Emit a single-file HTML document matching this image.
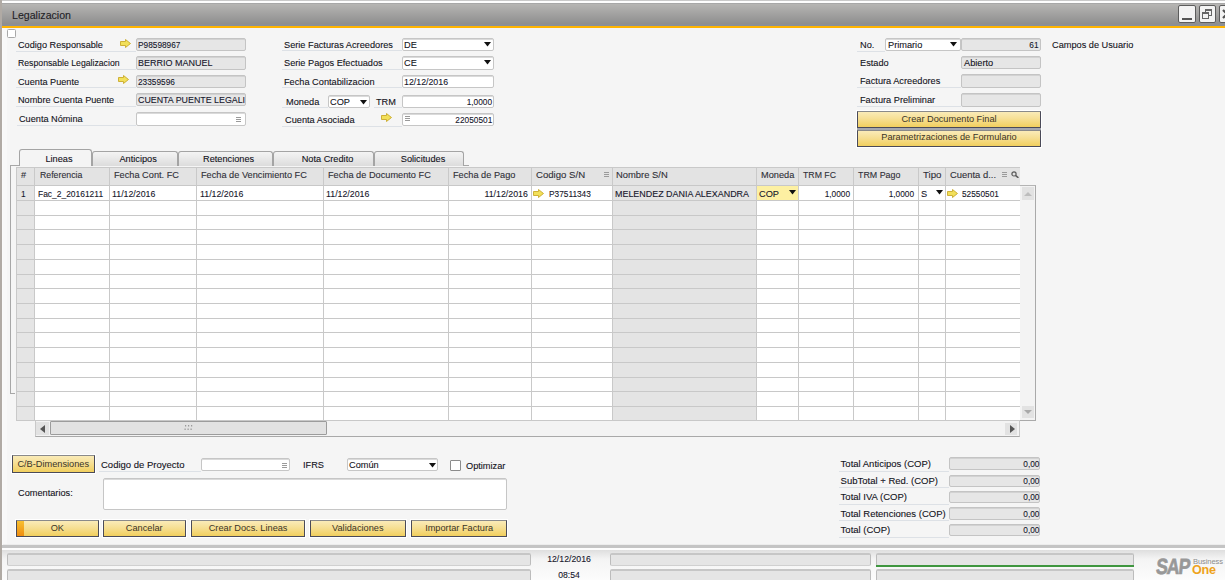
<!DOCTYPE html>
<html><head><meta charset="utf-8"><style>
html,body{margin:0;padding:0;}
body{width:1225px;height:580px;position:relative;overflow:hidden;background:#f5f5f5;font-family:"Liberation Sans",sans-serif;}
body>div{position:absolute;}
.t{white-space:nowrap;line-height:1;-webkit-text-stroke:0.1px currentColor;}
svg{display:block;}
</style></head><body>
<div style="left:0px;top:0px;width:1225px;height:1px;background:#c9c9c9"></div>
<div style="left:0px;top:1px;width:1225px;height:2px;background:#fdfdfd"></div>
<div style="left:0px;top:0px;width:1.5px;height:580px;background:#b0aaa4"></div>
<div style="left:1.5px;top:3px;width:1.5px;height:577px;background:#fafafa"></div>
<div style="left:2px;top:3px;width:1223px;height:1px;background:#a7a7a7"></div>
<div style="left:2px;top:4px;width:1223px;height:20px;background:linear-gradient(#b6b5b3,#8e8e8e)"></div>
<div style="left:2px;top:24px;width:1223px;height:2px;background:#8b8f96"></div>
<div style="left:2px;top:26px;width:1223px;height:2px;background:#ffb400"></div>
<div style="left:3px;top:28px;width:1222px;height:517px;background:#f5f5f5"></div>
<div style="left:3px;top:28px;width:4px;height:517px;background:#f8f8f8"></div>
<div class="t" style="left:12px;top:9.94px;font-size:11px;color:#221e26;transform:scaleX(0.965);transform-origin:0 0;">Legalizacion</div>
<div style="left:1178px;top:5px;width:18px;height:18px;background:#f3f3f3;border:1px solid #5c5c5c;box-sizing:border-box;border-radius:2px"></div>
<div style="left:1182px;top:17.5px;width:10px;height:2.0px;background:#555"></div>
<div style="left:1198.5px;top:5px;width:17.5px;height:18px;background:#f3f3f3;border:1px solid #5c5c5c;box-sizing:border-box;border-radius:2px"></div>
<div style="left:1205px;top:9px;width:7px;height:7px;border:1.5px solid #666;border-top-width:2px;box-sizing:border-box"></div>
<div style="left:1202px;top:12px;width:7px;height:7px;background:#f3f3f3;border:1.5px solid #666;border-top-width:2.5px;box-sizing:border-box"></div>
<div style="left:1219px;top:5px;width:11px;height:18px;background:#f3f3f3;border:1px solid #5c5c5c;box-sizing:border-box;border-radius:2px"></div>
<div style="left:1222px;top:9px;width:10px;height:10px"><svg width="10" height="10" viewBox="0 0 10 10"><path d="M1 1L9 9M9 1L1 9" stroke="#505050" stroke-width="2.2"/></svg></div>
<div style="left:7px;top:28.5px;width:9px;height:9.0px;background:#fff;border:1px solid #a8a8a8;box-sizing:border-box;border-radius:1.5px"></div>
<div style="left:16px;top:50.5px;width:119.5px;height:1.0px;background:#dde1e6"></div>
<div class="t" style="left:18px;top:40.21px;font-size:9.5px;color:#121220;transform:scaleX(0.9632);transform-origin:0 0;">Codigo Responsable</div>
<div style="left:135.5px;top:38px;width:110.5px;height:13px;background:#e6e6e6;border:1px solid #c4c4c4;box-sizing:border-box;border-radius:2px;box-shadow:inset 0 1px 0 #d2d2d2"></div>
<div class="t" style="left:137.5px;top:40.21px;font-size:9.5px;color:#15152a;transform:scaleX(0.8737);transform-origin:0 0;">P98598967</div>
<div style="left:16px;top:69px;width:119.5px;height:1px;background:#dde1e6"></div>
<div class="t" style="left:18px;top:58.21px;font-size:9.5px;color:#121220;transform:scaleX(0.9158);transform-origin:0 0;">Responsable Legalizacion</div>
<div style="left:135.5px;top:56px;width:110.5px;height:13.5px;background:#e6e6e6;border:1px solid #c4c4c4;box-sizing:border-box;border-radius:2px;box-shadow:inset 0 1px 0 #d2d2d2"></div>
<div class="t" style="left:137.5px;top:58.21px;font-size:9.5px;color:#15152a;transform:scaleX(0.9474);transform-origin:0 0;">BERRIO MANUEL</div>
<div style="left:16px;top:87px;width:119.5px;height:1px;background:#dde1e6"></div>
<div class="t" style="left:18px;top:77.21px;font-size:9.5px;color:#121220;transform:scaleX(0.9632);transform-origin:0 0;">Cuenta Puente</div>
<div style="left:135.5px;top:74.5px;width:110.5px;height:13.0px;background:#e6e6e6;border:1px solid #c4c4c4;box-sizing:border-box;border-radius:2px;box-shadow:inset 0 1px 0 #d2d2d2"></div>
<div class="t" style="left:137.5px;top:77.21px;font-size:9.5px;color:#15152a;transform:scaleX(0.8737);transform-origin:0 0;">23359596</div>
<div style="left:16px;top:105.5px;width:119.5px;height:1.0px;background:#dde1e6"></div>
<div class="t" style="left:18px;top:95.21px;font-size:9.5px;color:#121220;transform:scaleX(0.9632);transform-origin:0 0;">Nombre Cuenta Puente</div>
<div style="left:135.5px;top:93px;width:110.5px;height:13px;background:#e6e6e6;border:1px solid #c4c4c4;box-sizing:border-box;border-radius:2px;box-shadow:inset 0 1px 0 #d2d2d2"></div>
<div class="t" style="left:137.5px;top:95.21px;font-size:9.5px;color:#15152a;transform:scaleX(0.9316);transform-origin:0 0;">CUENTA PUENTE LEGALI</div>
<div style="left:17px;top:125px;width:118.5px;height:1px;background:#dde1e6"></div>
<div class="t" style="left:19px;top:114.21px;font-size:9.5px;color:#121220;transform:scaleX(0.9632);transform-origin:0 0;">Cuenta N&oacute;mina</div>
<div style="left:135.5px;top:112px;width:110.5px;height:13.5px;background:#fff;border:1px solid #c6c6c6;box-sizing:border-box;border-radius:2px;box-shadow:inset 0 1px 0 #dadada"></div>
<div style="left:236px;top:116.5px;width:5px;height:5px"><svg width="5" height="5" viewBox="0 0 5 5"><rect x="0" y="0" width="5" height="1" fill="#9a9a9a"/><rect x="0" y="2" width="5" height="1" fill="#9a9a9a"/><rect x="0" y="4" width="5" height="1" fill="#9a9a9a"/></svg></div>
<div style="left:120px;top:39px;width:11px;height:9px"><svg width="11" height="9" viewBox="0 0 11 9"><path d="M0.5 2.5H5.5V0.5L10.5 4.5L5.5 8.5V6.5H0.5Z" fill="#f2e05a" stroke="#c9a92a" stroke-width="0.9"/></svg></div>
<div style="left:117.5px;top:75px;width:11px;height:9px"><svg width="11" height="9" viewBox="0 0 11 9"><path d="M0.5 2.5H5.5V0.5L10.5 4.5L5.5 8.5V6.5H0.5Z" fill="#f2e05a" stroke="#c9a92a" stroke-width="0.9"/></svg></div>
<div style="left:282px;top:50px;width:120px;height:1px;background:#dde1e6"></div>
<div class="t" style="left:284.3px;top:40.21px;font-size:9.5px;color:#121220;transform:scaleX(0.9684);transform-origin:0 0;">Serie Facturas Acreedores</div>
<div style="left:402px;top:38px;width:92px;height:13px;background:#fff;border:1px solid #c6c6c6;box-sizing:border-box;border-radius:2px;box-shadow:inset 0 1px 0 #dadada"></div>
<div style="left:282px;top:69px;width:120px;height:1px;background:#dde1e6"></div>
<div class="t" style="left:284.3px;top:58.21px;font-size:9.5px;color:#121220;transform:scaleX(0.9684);transform-origin:0 0;">Serie Pagos Efectuados</div>
<div style="left:402px;top:56px;width:92px;height:13.5px;background:#fff;border:1px solid #c6c6c6;box-sizing:border-box;border-radius:2px;box-shadow:inset 0 1px 0 #dadada"></div>
<div style="left:282px;top:87px;width:120px;height:1px;background:#dde1e6"></div>
<div class="t" style="left:284.3px;top:77.21px;font-size:9.5px;color:#121220;transform:scaleX(0.9684);transform-origin:0 0;">Fecha Contabilizacion</div>
<div style="left:402px;top:74.5px;width:92px;height:13.5px;background:#fff;border:1px solid #c6c6c6;box-sizing:border-box;border-radius:2px;box-shadow:inset 0 1px 0 #dadada"></div>
<div style="left:282px;top:107px;width:45.5px;height:1px;background:#dde1e6"></div>
<div style="left:374px;top:107px;width:28px;height:1px;background:#dde1e6"></div>
<div class="t" style="left:285.7px;top:97.21px;font-size:9.5px;color:#121220;transform:scaleX(0.9684);transform-origin:0 0;">Moneda</div>
<div style="left:327.5px;top:94.7px;width:42.0px;height:13.0px;background:#fff;border:1px solid #c6c6c6;box-sizing:border-box;border-radius:2px;box-shadow:inset 0 1px 0 #dadada"></div>
<div class="t" style="left:330px;top:97.21px;font-size:9.5px;color:#121220;transform:scaleX(0.9684);transform-origin:0 0;">COP</div>
<div style="left:360px;top:99.5px;width:7px;height:5px"><svg width="7" height="5" viewBox="0 0 7 5"><path d="M0 0H7L3.5 4.5Z" fill="#111"/></svg></div>
<div class="t" style="left:376.2px;top:97.21px;font-size:9.5px;color:#121220;transform:scaleX(0.9684);transform-origin:0 0;">TRM</div>
<div style="left:402px;top:94.7px;width:92px;height:13.3px;background:#fff;border:1px solid #c6c6c6;box-sizing:border-box;border-radius:2px;box-shadow:inset 0 1px 0 #dadada"></div>
<div style="left:282px;top:126px;width:120px;height:1px;background:#dde1e6"></div>
<div class="t" style="left:285.4px;top:115.21px;font-size:9.5px;color:#121220;transform:scaleX(0.9684);transform-origin:0 0;">Cuenta Asociada</div>
<div style="left:402px;top:113.3px;width:92px;height:13.0px;background:#fff;border:1px solid #c6c6c6;box-sizing:border-box;border-radius:2px;box-shadow:inset 0 1px 0 #dadada"></div>
<div class="t" style="left:404px;top:40.21px;font-size:9.5px;color:#121220;transform:scaleX(0.9684);transform-origin:0 0;">DE</div>
<div style="left:484px;top:42px;width:7px;height:5px"><svg width="7" height="5" viewBox="0 0 7 5"><path d="M0 0H7L3.5 4.5Z" fill="#111"/></svg></div>
<div class="t" style="left:404px;top:58.21px;font-size:9.5px;color:#121220;transform:scaleX(0.9684);transform-origin:0 0;">CE</div>
<div style="left:484px;top:60.2px;width:7px;height:5px"><svg width="7" height="5" viewBox="0 0 7 5"><path d="M0 0H7L3.5 4.5Z" fill="#111"/></svg></div>
<div class="t" style="left:403.5px;top:77.21px;font-size:9.5px;color:#15152a;transform:scaleX(0.9263);transform-origin:0 0;">12/12/2016</div>
<div class="t" style="right:732.5px;top:97.21px;font-size:9.5px;color:#15152a;text-align:right;transform:scaleX(0.8737);transform-origin:100% 0;">1,0000</div>
<div class="t" style="right:732.5px;top:115.21px;font-size:9.5px;color:#15152a;text-align:right;transform:scaleX(0.8737);transform-origin:100% 0;">22050501</div>
<div style="left:405px;top:116px;width:5px;height:5px"><svg width="5" height="5" viewBox="0 0 5 5"><rect x="0" y="0" width="5" height="1" fill="#9a9a9a"/><rect x="0" y="2" width="5" height="1" fill="#9a9a9a"/><rect x="0" y="4" width="5" height="1" fill="#9a9a9a"/></svg></div>
<div style="left:381px;top:112.5px;width:11px;height:9px"><svg width="11" height="9" viewBox="0 0 11 9"><path d="M0.5 2.5H5.5V0.5L10.5 4.5L5.5 8.5V6.5H0.5Z" fill="#f2e05a" stroke="#c9a92a" stroke-width="0.9"/></svg></div>
<div class="t" style="left:859.5px;top:40.21px;font-size:9.5px;color:#121220;transform:scaleX(0.9684);transform-origin:0 0;">No.</div>
<div style="left:857px;top:50.5px;width:28px;height:1.0px;background:#dde1e6"></div>
<div style="left:885px;top:38.3px;width:75.5px;height:12.5px;background:#fff;border:1px solid #c6c6c6;box-sizing:border-box;border-radius:2px;box-shadow:inset 0 1px 0 #dadada"></div>
<div class="t" style="left:888px;top:40.21px;font-size:9.5px;color:#121220;transform:scaleX(0.9684);transform-origin:0 0;">Primario</div>
<div style="left:950px;top:42px;width:7px;height:5px"><svg width="7" height="5" viewBox="0 0 7 5"><path d="M0 0H7L3.5 4.5Z" fill="#111"/></svg></div>
<div style="left:961px;top:38px;width:80px;height:12.8px;background:#e6e6e6;border:1px solid #c4c4c4;box-sizing:border-box;border-radius:2px;box-shadow:inset 0 1px 0 #d2d2d2"></div>
<div class="t" style="right:186px;top:40.21px;font-size:9.5px;color:#15152a;text-align:right;transform:scaleX(0.8737);transform-origin:100% 0;">61</div>
<div class="t" style="left:859.5px;top:58.21px;font-size:9.5px;color:#121220;transform:scaleX(0.9684);transform-origin:0 0;">Estado</div>
<div style="left:961px;top:56px;width:80px;height:13.3px;background:#e6e6e6;border:1px solid #c4c4c4;box-sizing:border-box;border-radius:2px;box-shadow:inset 0 1px 0 #d2d2d2"></div>
<div class="t" style="left:963.5px;top:58.21px;font-size:9.5px;color:#121220;transform:scaleX(0.9684);transform-origin:0 0;">Abierto</div>
<div class="t" style="left:859.5px;top:76.21px;font-size:9.5px;color:#121220;transform:scaleX(0.9684);transform-origin:0 0;">Factura Acreedores</div>
<div style="left:857px;top:87px;width:104px;height:1px;background:#dde1e6"></div>
<div style="left:961px;top:74px;width:80px;height:13.5px;background:#e6e6e6;border:1px solid #c4c4c4;box-sizing:border-box;border-radius:2px;box-shadow:inset 0 1px 0 #d2d2d2"></div>
<div class="t" style="left:859.5px;top:94.71px;font-size:9.5px;color:#121220;transform:scaleX(0.9684);transform-origin:0 0;">Factura Preliminar</div>
<div style="left:857px;top:105.5px;width:104px;height:1.0px;background:#dde1e6"></div>
<div style="left:961px;top:93px;width:80px;height:13.6px;background:#e6e6e6;border:1px solid #c4c4c4;box-sizing:border-box;border-radius:2px;box-shadow:inset 0 1px 0 #d2d2d2"></div>
<div style="left:857px;top:111px;width:184px;height:17.2px;background:linear-gradient(#faebb8,#f6df94 45%,#f1cf5e);border:1px solid #4a4a58;border-top-color:#8a8a8a;box-sizing:border-box;box-shadow:0 0 0 1px #fff"></div>
<div class="t" style="left:837.0px;width:224px;top:114.21px;font-size:9.5px;color:#3a3428;text-align:center;transform:scaleX(0.9684);transform-origin:50% 0;-webkit-text-stroke:0">Crear Documento Final</div>
<div style="left:857px;top:130.2px;width:184px;height:16.4px;background:linear-gradient(#faebb8,#f6df94 45%,#f1cf5e);border:1px solid #4a4a58;border-top-color:#8a8a8a;box-sizing:border-box;box-shadow:0 0 0 1px #fff"></div>
<div class="t" style="left:837.0px;width:224px;top:132.21px;font-size:9.5px;color:#3a3428;text-align:center;transform:scaleX(0.9684);transform-origin:50% 0;-webkit-text-stroke:0">Parametrizaciones de Formulario</div>
<div style="left:857px;top:128px;width:184px;height:2.2px;background:#a3a6ae"></div>
<div class="t" style="left:1051.5px;top:40.21px;font-size:9.5px;color:#121220;transform:scaleX(0.9684);transform-origin:0 0;">Campos de Usuario</div>
<div style="left:10px;top:165px;width:459px;height:1px;background:#a7a7a7"></div>
<div style="left:10px;top:165px;width:1px;height:229px;background:#a7a7a7"></div>
<div style="left:10px;top:393px;width:5px;height:1px;background:#a7a7a7"></div>
<div style="left:91.5px;top:150.5px;width:86.3px;height:15.0px;background:linear-gradient(#f4f4f4,#dcdcdc);border:1px solid #a4a4a4;border-bottom:none;box-sizing:border-box;border-radius:3px 3px 0 0"></div>
<div class="t" style="left:95.0px;width:86.30000000000001px;top:154.21px;font-size:9.5px;color:#121220;text-align:center;transform:scaleX(0.9684);transform-origin:50% 0;">Anticipos</div>
<div style="left:177.8px;top:150.5px;width:95.2px;height:15.0px;background:linear-gradient(#f4f4f4,#dcdcdc);border:1px solid #a4a4a4;border-bottom:none;box-sizing:border-box;border-radius:3px 3px 0 0"></div>
<div class="t" style="left:181.3px;width:95.19999999999999px;top:154.21px;font-size:9.5px;color:#121220;text-align:center;transform:scaleX(0.9684);transform-origin:50% 0;">Retenciones</div>
<div style="left:273px;top:150.5px;width:101px;height:15.0px;background:linear-gradient(#f4f4f4,#dcdcdc);border:1px solid #a4a4a4;border-bottom:none;box-sizing:border-box;border-radius:3px 3px 0 0"></div>
<div class="t" style="left:276.5px;width:101px;top:154.21px;font-size:9.5px;color:#121220;text-align:center;transform:scaleX(0.9684);transform-origin:50% 0;">Nota Credito</div>
<div style="left:374px;top:150.5px;width:90px;height:15.0px;background:linear-gradient(#f4f4f4,#dcdcdc);border:1px solid #a4a4a4;border-bottom:none;box-sizing:border-box;border-radius:3px 3px 0 0"></div>
<div class="t" style="left:377.5px;width:90px;top:154.21px;font-size:9.5px;color:#121220;text-align:center;transform:scaleX(0.9684);transform-origin:50% 0;">Solicitudes</div>
<div style="left:18.5px;top:149px;width:73.0px;height:17px;background:#f4f4f4;border:1px solid #a4a4a4;border-bottom:none;box-sizing:border-box;border-radius:3px 3px 0 0"></div>
<div class="t" style="left:24.4px;width:70px;top:154.21px;font-size:9.5px;color:#121220;text-align:center;transform:scaleX(0.9684);transform-origin:50% 0;">Lineas</div>
<div style="left:16.5px;top:185.5px;width:1003.5px;height:235.0px;background:#fff"></div>
<div style="left:16.5px;top:185.5px;width:18.0px;height:235.0px;background:#e5e5e5"></div>
<div style="left:612.5px;top:185.5px;width:144.0px;height:235.0px;background:#e4e4e4"></div>
<div style="left:756.5px;top:186px;width:42.0px;height:14px;background:#fdf0a2"></div>
<div style="left:16.5px;top:167px;width:1003.5px;height:18.5px;background:#e3e3e3;border-top:1px solid #c9c9c9;box-sizing:border-box"></div>
<div style="left:16.5px;top:185px;width:1003.5px;height:1px;background:#c8c8c8"></div>
<div style="left:16.5px;top:200px;width:1003.5px;height:1px;background:#c8c8c8"></div>
<div style="left:16.5px;top:215px;width:1003.5px;height:1px;background:#c8c8c8"></div>
<div style="left:16.5px;top:229px;width:1003.5px;height:1px;background:#c8c8c8"></div>
<div style="left:16.5px;top:244px;width:1003.5px;height:1px;background:#c8c8c8"></div>
<div style="left:16.5px;top:259px;width:1003.5px;height:1px;background:#c8c8c8"></div>
<div style="left:16.5px;top:274px;width:1003.5px;height:1px;background:#c8c8c8"></div>
<div style="left:16.5px;top:288px;width:1003.5px;height:1px;background:#c8c8c8"></div>
<div style="left:16.5px;top:303px;width:1003.5px;height:1px;background:#c8c8c8"></div>
<div style="left:16.5px;top:318px;width:1003.5px;height:1px;background:#c8c8c8"></div>
<div style="left:16.5px;top:332px;width:1003.5px;height:1px;background:#c8c8c8"></div>
<div style="left:16.5px;top:347px;width:1003.5px;height:1px;background:#c8c8c8"></div>
<div style="left:16.5px;top:362px;width:1003.5px;height:1px;background:#c8c8c8"></div>
<div style="left:16.5px;top:377px;width:1003.5px;height:1px;background:#c8c8c8"></div>
<div style="left:16.5px;top:391px;width:1003.5px;height:1px;background:#c8c8c8"></div>
<div style="left:16.5px;top:406px;width:1003.5px;height:1px;background:#c8c8c8"></div>
<div style="left:16.5px;top:420px;width:1003.5px;height:1px;background:#c8c8c8"></div>
<div style="left:34px;top:167px;width:1px;height:253.5px;background:#c9c9c9"></div>
<div style="left:109px;top:167px;width:1px;height:253.5px;background:#c9c9c9"></div>
<div style="left:196px;top:167px;width:1px;height:253.5px;background:#c9c9c9"></div>
<div style="left:323px;top:167px;width:1px;height:253.5px;background:#c9c9c9"></div>
<div style="left:448px;top:167px;width:1px;height:253.5px;background:#c9c9c9"></div>
<div style="left:531px;top:167px;width:1px;height:253.5px;background:#c9c9c9"></div>
<div style="left:612px;top:167px;width:1px;height:253.5px;background:#c9c9c9"></div>
<div style="left:756px;top:167px;width:1px;height:253.5px;background:#c9c9c9"></div>
<div style="left:798px;top:167px;width:1px;height:253.5px;background:#c9c9c9"></div>
<div style="left:853px;top:167px;width:1px;height:253.5px;background:#c9c9c9"></div>
<div style="left:918px;top:167px;width:1px;height:253.5px;background:#c9c9c9"></div>
<div style="left:945px;top:167px;width:1px;height:253.5px;background:#c9c9c9"></div>
<div style="left:16px;top:167px;width:1px;height:253.5px;background:#c9c9c9"></div>
<div class="t" style="left:21px;top:170.21px;font-size:9.5px;color:#2e2e36;transform:scaleX(0.9684);transform-origin:0 0;">#</div>
<div class="t" style="left:39.5px;top:170.21px;font-size:9.5px;color:#2e2e36;transform:scaleX(0.9211);transform-origin:0 0;">Referencia</div>
<div class="t" style="left:113.7px;top:170.21px;font-size:9.5px;color:#2e2e36;transform:scaleX(0.9684);transform-origin:0 0;">Fecha Cont. FC</div>
<div class="t" style="left:200.6px;top:170.21px;font-size:9.5px;color:#2e2e36;transform:scaleX(0.9684);transform-origin:0 0;">Fecha de Vencimiento FC</div>
<div class="t" style="left:328px;top:170.21px;font-size:9.5px;color:#2e2e36;transform:scaleX(0.9684);transform-origin:0 0;">Fecha de Documento FC</div>
<div class="t" style="left:452.5px;top:170.21px;font-size:9.5px;color:#2e2e36;transform:scaleX(0.9684);transform-origin:0 0;">Fecha de Pago</div>
<div class="t" style="left:535.8px;top:170.21px;font-size:9.5px;color:#2e2e36;transform:scaleX(1.0105);transform-origin:0 0;">Codigo S/N</div>
<div class="t" style="left:616.3px;top:170.21px;font-size:9.5px;color:#2e2e36;transform:scaleX(0.9895);transform-origin:0 0;">Nombre S/N</div>
<div class="t" style="left:760.8px;top:170.21px;font-size:9.5px;color:#2e2e36;transform:scaleX(0.9684);transform-origin:0 0;">Moneda</div>
<div class="t" style="left:803.2px;top:170.21px;font-size:9.5px;color:#2e2e36;transform:scaleX(0.92);transform-origin:0 0;">TRM FC</div>
<div class="t" style="left:858px;top:170.21px;font-size:9.5px;color:#2e2e36;transform:scaleX(0.9337);transform-origin:0 0;">TRM Pago</div>
<div class="t" style="left:922.5px;top:170.21px;font-size:9.5px;color:#2e2e36;transform:scaleX(1.0211);transform-origin:0 0;">Tipo</div>
<div class="t" style="left:950.1px;top:170.21px;font-size:9.5px;color:#2e2e36;transform:scaleX(0.9895);transform-origin:0 0;">Cuenta d...</div>
<div style="left:603.5px;top:171.5px;width:5px;height:5px"><svg width="5" height="5" viewBox="0 0 5 5"><rect x="0" y="0" width="5" height="1" fill="#9a9a9a"/><rect x="0" y="2" width="5" height="1" fill="#9a9a9a"/><rect x="0" y="4" width="5" height="1" fill="#9a9a9a"/></svg></div>
<div style="left:1002px;top:171.5px;width:5px;height:5px"><svg width="5" height="5" viewBox="0 0 5 5"><rect x="0" y="0" width="5" height="1" fill="#9a9a9a"/><rect x="0" y="2" width="5" height="1" fill="#9a9a9a"/><rect x="0" y="4" width="5" height="1" fill="#9a9a9a"/></svg></div>
<div style="left:1010.5px;top:171px;width:8px;height:7px"><svg width="8" height="7" viewBox="0 0 8 7"><circle cx="3" cy="2.9" r="2.1" fill="none" stroke="#5a5a5a" stroke-width="1.2"/><path d="M4.5 4.4L7.4 6.8" stroke="#5a5a5a" stroke-width="1.6"/></svg></div>
<div class="t" style="left:20.6px;top:189.21px;font-size:9.5px;color:#15152a;transform:scaleX(0.8737);transform-origin:0 0;">1</div>
<div class="t" style="left:37.8px;top:189.21px;font-size:9.5px;color:#15152a;transform:scaleX(0.8884);transform-origin:0 0;">Fac_2_20161211</div>
<div class="t" style="left:112px;top:189.21px;font-size:9.5px;color:#15152a;transform:scaleX(0.9263);transform-origin:0 0;">11/12/2016</div>
<div class="t" style="left:199.5px;top:189.21px;font-size:9.5px;color:#15152a;transform:scaleX(0.9263);transform-origin:0 0;">11/12/2016</div>
<div class="t" style="left:325.8px;top:189.21px;font-size:9.5px;color:#15152a;transform:scaleX(0.9263);transform-origin:0 0;">11/12/2016</div>
<div class="t" style="right:697.5px;top:189.21px;font-size:9.5px;color:#15152a;text-align:right;transform:scaleX(0.9263);transform-origin:100% 0;">11/12/2016</div>
<div style="left:533px;top:188.5px;width:11px;height:9px"><svg width="11" height="9" viewBox="0 0 11 9"><path d="M0.5 2.5H5.5V0.5L10.5 4.5L5.5 8.5V6.5H0.5Z" fill="#f2e05a" stroke="#c9a92a" stroke-width="0.9"/></svg></div>
<div class="t" style="left:549px;top:189.21px;font-size:9.5px;color:#15152a;transform:scaleX(0.8737);transform-origin:0 0;">P37511343</div>
<div class="t" style="left:615px;top:189.21px;font-size:9.5px;color:#15152a;transform:scaleX(0.94);transform-origin:0 0;">MELENDEZ DANIA ALEXANDRA</div>
<div class="t" style="left:759px;top:189.21px;font-size:9.5px;color:#15152a;transform:scaleX(0.9684);transform-origin:0 0;">COP</div>
<div style="left:789px;top:190px;width:7px;height:5px"><svg width="7" height="5" viewBox="0 0 7 5"><path d="M0 0H7L3.5 4.5Z" fill="#111"/></svg></div>
<div class="t" style="right:375px;top:189.21px;font-size:9.5px;color:#15152a;text-align:right;transform:scaleX(0.8737);transform-origin:100% 0;">1,0000</div>
<div class="t" style="right:311px;top:189.21px;font-size:9.5px;color:#15152a;text-align:right;transform:scaleX(0.8737);transform-origin:100% 0;">1,0000</div>
<div class="t" style="left:921.2px;top:189.21px;font-size:9.5px;color:#15152a;transform:scaleX(0.9684);transform-origin:0 0;">S</div>
<div style="left:936px;top:190px;width:7px;height:5px"><svg width="7" height="5" viewBox="0 0 7 5"><path d="M0 0H7L3.5 4.5Z" fill="#111"/></svg></div>
<div style="left:947px;top:188.5px;width:11px;height:9px"><svg width="11" height="9" viewBox="0 0 11 9"><path d="M0.5 2.5H5.5V0.5L10.5 4.5L5.5 8.5V6.5H0.5Z" fill="#f2e05a" stroke="#c9a92a" stroke-width="0.9"/></svg></div>
<div class="t" style="left:962.4px;top:189.21px;font-size:9.5px;color:#15152a;transform:scaleX(0.8737);transform-origin:0 0;">52550501</div>
<div style="left:1020px;top:185px;width:16px;height:235.5px;background:#f3f3f3;border-top:1px solid #b4b4b4;border-right:1px solid #a9a9a9;border-bottom:1px solid #a9a9a9;box-sizing:border-box"></div>
<div style="left:1022px;top:187px;width:12px;height:13px;background:#e2e2e2"></div>
<div style="left:1024px;top:191px;width:8px;height:5px"><svg width="8" height="5"><path d="M0 5H8L4 1Z" fill="#bdbdbd"/></svg></div>
<div style="left:1021.5px;top:406px;width:12.5px;height:12px;background:#e2e2e2"></div>
<div style="left:1024px;top:410px;width:8px;height:5px"><svg width="8" height="5"><path d="M0 0H8L4 4Z" fill="#a9a9a9"/></svg></div>
<div style="left:34.5px;top:420.5px;width:985.0px;height:16.5px;background:#f3f3f3;border-bottom:1px solid #a9a9a9;border-left:1px solid #c9c9c9;border-right:1px solid #c9c9c9;box-sizing:border-box"></div>
<div style="left:35.5px;top:421.5px;width:13.3px;height:13.5px;background:#e2e2e2"></div>
<div style="left:39.5px;top:424.5px;width:5px;height:8px"><svg width="5" height="8"><path d="M5 0V8L0 4Z" fill="#555"/></svg></div>
<div style="left:50px;top:421.3px;width:276.5px;height:13.7px;background:#e2e2e2;border:1px solid #9c9c9c;box-sizing:border-box;border-radius:1px"></div>
<div style="left:183.5px;top:425px;width:9px;height:6px"><svg width="9" height="6"><g fill="#9a9a9a"><rect x="1" y="0" width="1.2" height="1.5"/><rect x="4" y="0" width="1.2" height="1.5"/><rect x="7" y="0" width="1.2" height="1.5"/><rect x="0.5" y="3.5" width="1.2" height="1.5"/><rect x="3.5" y="3.5" width="1.2" height="1.5"/><rect x="6.5" y="3.5" width="1.2" height="1.5"/></g></svg></div>
<div style="left:1005.3px;top:422.5px;width:11.9px;height:12.2px;background:#e2e2e2"></div>
<div style="left:1009.5px;top:424.5px;width:5px;height:8px"><svg width="5" height="8"><path d="M0 0V8L5 4Z" fill="#555"/></svg></div>
<div style="left:12.3px;top:455.2px;width:82.4px;height:17.4px;background:linear-gradient(#faebb8,#f6df94 45%,#f1cf5e);border:1px solid #4a4a58;border-top-color:#8a8a8a;box-sizing:border-box;box-shadow:0 0 0 1px #fff"></div>
<div class="t" style="left:-7.7px;width:122.4px;top:459.21px;font-size:9.5px;color:#3a3428;text-align:center;transform:scaleX(0.9684);transform-origin:50% 0;-webkit-text-stroke:0">C/B-Dimensiones</div>
<div class="t" style="left:101px;top:460.21px;font-size:9.5px;color:#121220;transform-origin:0 0;">Codigo de Proyecto</div>
<div style="left:98.5px;top:470.5px;width:102.0px;height:1.0px;background:#dde1e6"></div>
<div style="left:200.5px;top:458.2px;width:89.0px;height:13.1px;background:#fff;border:1px solid #c6c6c6;box-sizing:border-box;border-radius:2px;box-shadow:inset 0 1px 0 #dadada"></div>
<div style="left:281.5px;top:462.5px;width:5px;height:5px"><svg width="5" height="5" viewBox="0 0 5 5"><rect x="0" y="0" width="5" height="1" fill="#9a9a9a"/><rect x="0" y="2" width="5" height="1" fill="#9a9a9a"/><rect x="0" y="4" width="5" height="1" fill="#9a9a9a"/></svg></div>
<div class="t" style="left:302.5px;top:460.21px;font-size:9.5px;color:#121220;transform:scaleX(0.9684);transform-origin:0 0;">IFRS</div>
<div style="left:346.7px;top:458.2px;width:91.3px;height:13.1px;background:#fff;border:1px solid #c6c6c6;box-sizing:border-box;border-radius:2px;box-shadow:inset 0 1px 0 #dadada"></div>
<div class="t" style="left:349.2px;top:460.21px;font-size:9.5px;color:#121220;transform:scaleX(0.9684);transform-origin:0 0;">Com&uacute;n</div>
<div style="left:429px;top:462.6px;width:7px;height:5px"><svg width="7" height="5" viewBox="0 0 7 5"><path d="M0 0H7L3.5 4.5Z" fill="#111"/></svg></div>
<div style="left:450px;top:460.2px;width:11.2px;height:10.8px;background:#fff;border:1px solid #8c8c8c;box-sizing:border-box;border-radius:1px"></div>
<div class="t" style="left:466.2px;top:461.21px;font-size:9.5px;color:#121220;transform:scaleX(0.9684);transform-origin:0 0;">Optimizar</div>
<div class="t" style="left:18px;top:488.21px;font-size:9.5px;color:#121220;transform:scaleX(0.9684);transform-origin:0 0;">Comentarios:</div>
<div style="left:103.2px;top:478.2px;width:403.6px;height:31.6px;background:#fff;border:1px solid #c6c6c6;box-sizing:border-box;border-radius:2px;box-shadow:inset 0 1px 0 #dadada"></div>
<div style="left:16px;top:519.6px;width:82.6px;height:17.0px;background:linear-gradient(#faebb8,#f6df94 45%,#f1cf5e);border:1px solid #4a4a58;border-top-color:#8a8a8a;box-sizing:border-box;box-shadow:0 0 0 1px #fff"></div>
<div class="t" style="left:-4.0px;width:122.6px;top:523.21px;font-size:9.5px;color:#3a3428;text-align:center;transform:scaleX(0.9684);transform-origin:50% 0;-webkit-text-stroke:0">OK</div>
<div style="left:103.2px;top:519.6px;width:82.5px;height:17.0px;background:linear-gradient(#faebb8,#f6df94 45%,#f1cf5e);border:1px solid #4a4a58;border-top-color:#8a8a8a;box-sizing:border-box;box-shadow:0 0 0 1px #fff"></div>
<div class="t" style="left:83.2px;width:122.49999999999999px;top:523.21px;font-size:9.5px;color:#3a3428;text-align:center;transform:scaleX(0.9684);transform-origin:50% 0;-webkit-text-stroke:0">Cancelar</div>
<div style="left:190.6px;top:519.6px;width:114.2px;height:17.0px;background:linear-gradient(#faebb8,#f6df94 45%,#f1cf5e);border:1px solid #4a4a58;border-top-color:#8a8a8a;box-sizing:border-box;box-shadow:0 0 0 1px #fff"></div>
<div class="t" style="left:170.6px;width:154.20000000000002px;top:523.21px;font-size:9.5px;color:#3a3428;text-align:center;transform:scaleX(0.9684);transform-origin:50% 0;-webkit-text-stroke:0">Crear Docs. Lineas</div>
<div style="left:310.2px;top:519.6px;width:95.6px;height:17.0px;background:linear-gradient(#faebb8,#f6df94 45%,#f1cf5e);border:1px solid #4a4a58;border-top-color:#8a8a8a;box-sizing:border-box;box-shadow:0 0 0 1px #fff"></div>
<div class="t" style="left:290.2px;width:135.60000000000002px;top:523.21px;font-size:9.5px;color:#3a3428;text-align:center;transform:scaleX(0.9684);transform-origin:50% 0;-webkit-text-stroke:0">Validaciones</div>
<div style="left:410.8px;top:519.6px;width:96.3px;height:17.0px;background:linear-gradient(#faebb8,#f6df94 45%,#f1cf5e);border:1px solid #4a4a58;border-top-color:#8a8a8a;box-sizing:border-box;box-shadow:0 0 0 1px #fff"></div>
<div class="t" style="left:390.8px;width:136.3px;top:523.21px;font-size:9.5px;color:#3a3428;text-align:center;transform:scaleX(0.9684);transform-origin:50% 0;-webkit-text-stroke:0">Importar Factura</div>
<div style="left:17px;top:520.6px;width:7px;height:15.0px;background:linear-gradient(#f8c030,#ef8d10)"></div>
<div style="left:838.6px;top:470.5px;width:110.7px;height:1.0px;background:#dde1e6"></div>
<div class="t" style="left:840.6px;top:459.21px;font-size:9.5px;color:#121220;transform-origin:0 0;">Total Anticipos (COP)</div>
<div style="left:949.3px;top:457.4px;width:91.2px;height:12.8px;background:#e6e6e6;border:1px solid #c4c4c4;box-sizing:border-box;border-radius:2px;box-shadow:inset 0 1px 0 #d2d2d2"></div>
<div class="t" style="right:186px;top:459.21px;font-size:9.5px;color:#15152a;text-align:right;transform:scaleX(0.8737);transform-origin:100% 0;">0,00</div>
<div style="left:838.6px;top:487px;width:110.7px;height:1px;background:#dde1e6"></div>
<div class="t" style="left:840.6px;top:476.21px;font-size:9.5px;color:#121220;transform-origin:0 0;">SubTotal + Red. (COP)</div>
<div style="left:949.3px;top:474.5px;width:91.2px;height:12.3px;background:#e6e6e6;border:1px solid #c4c4c4;box-sizing:border-box;border-radius:2px;box-shadow:inset 0 1px 0 #d2d2d2"></div>
<div class="t" style="right:186px;top:476.21px;font-size:9.5px;color:#15152a;text-align:right;transform:scaleX(0.8737);transform-origin:100% 0;">0,00</div>
<div style="left:838.6px;top:503.5px;width:110.7px;height:1.0px;background:#dde1e6"></div>
<div class="t" style="left:840.6px;top:492.21px;font-size:9.5px;color:#121220;transform-origin:0 0;">Total IVA (COP)</div>
<div style="left:949.3px;top:490.6px;width:91.2px;height:12.7px;background:#e6e6e6;border:1px solid #c4c4c4;box-sizing:border-box;border-radius:2px;box-shadow:inset 0 1px 0 #d2d2d2"></div>
<div class="t" style="right:186px;top:492.21px;font-size:9.5px;color:#15152a;text-align:right;transform:scaleX(0.8737);transform-origin:100% 0;">0,00</div>
<div style="left:838.6px;top:520px;width:110.7px;height:1px;background:#dde1e6"></div>
<div class="t" style="left:840.6px;top:509.21px;font-size:9.5px;color:#121220;transform-origin:0 0;">Total Retenciones (COP)</div>
<div style="left:949.3px;top:507.4px;width:91.2px;height:12.6px;background:#e6e6e6;border:1px solid #c4c4c4;box-sizing:border-box;border-radius:2px;box-shadow:inset 0 1px 0 #d2d2d2"></div>
<div class="t" style="right:186px;top:509.21px;font-size:9.5px;color:#15152a;text-align:right;transform:scaleX(0.8737);transform-origin:100% 0;">0,00</div>
<div style="left:838.6px;top:536.5px;width:110.7px;height:1.0px;background:#dde1e6"></div>
<div class="t" style="left:840.6px;top:525.21px;font-size:9.5px;color:#121220;transform-origin:0 0;">Total (COP)</div>
<div style="left:949.3px;top:523.5px;width:91.2px;height:12.7px;background:#e6e6e6;border:1px solid #c4c4c4;box-sizing:border-box;border-radius:2px;box-shadow:inset 0 1px 0 #d2d2d2"></div>
<div class="t" style="right:186px;top:525.21px;font-size:9.5px;color:#15152a;text-align:right;transform:scaleX(0.8737);transform-origin:100% 0;">0,00</div>
<div style="left:2.5px;top:543.5px;width:1222.5px;height:1.5px;background:#ececec"></div>
<div style="left:2px;top:545px;width:1223px;height:3px;background:#c4c4c4"></div>
<div style="left:2px;top:548px;width:1223px;height:2px;background:#fdfdfd"></div>
<div style="left:2px;top:550px;width:1223px;height:30px;background:linear-gradient(#dedede,#f4f4f4 30%,#fcfcfc)"></div>
<div style="left:7.3px;top:553px;width:523.3px;height:12.5px;background:#e5e5e5;border-top:2px solid #c6c6c6;border-left:1px solid #bcbcbc;border-right:1px solid #bcbcbc;border-bottom:1px solid #d0d0d0;box-sizing:border-box;border-radius:2px"></div>
<div style="left:7.3px;top:569px;width:523.3px;height:13px;background:#e5e5e5;border-top:2px solid #c6c6c6;border-left:1px solid #bcbcbc;border-right:1px solid #bcbcbc;border-bottom:1px solid #d0d0d0;box-sizing:border-box;border-radius:2px"></div>
<div style="left:610.3px;top:553px;width:261.1px;height:12.5px;background:#e5e5e5;border-top:2px solid #c6c6c6;border-left:1px solid #bcbcbc;border-right:1px solid #bcbcbc;border-bottom:1px solid #d0d0d0;box-sizing:border-box;border-radius:2px"></div>
<div style="left:610.3px;top:569px;width:261.1px;height:13px;background:#e5e5e5;border-top:2px solid #c6c6c6;border-left:1px solid #bcbcbc;border-right:1px solid #bcbcbc;border-bottom:1px solid #d0d0d0;box-sizing:border-box;border-radius:2px"></div>
<div style="left:875.5px;top:553px;width:258.3px;height:12.5px;background:#e5e5e5;border-top:2px solid #c6c6c6;border-left:1px solid #bcbcbc;border-right:1px solid #bcbcbc;border-bottom:1px solid #d0d0d0;box-sizing:border-box;border-radius:2px"></div>
<div style="left:875.5px;top:569px;width:258.3px;height:13px;background:#e5e5e5;border-top:2px solid #c6c6c6;border-left:1px solid #bcbcbc;border-right:1px solid #bcbcbc;border-bottom:1px solid #d0d0d0;box-sizing:border-box;border-radius:2px"></div>
<div style="left:876px;top:565px;width:257.8px;height:2px;background:#3f963f"></div>
<div class="t" style="left:529.0px;width:80px;top:554.63px;font-size:9px;color:#15152a;text-align:center;transform:scaleX(0.97);transform-origin:50% 0;">12/12/2016</div>
<div class="t" style="left:538.5px;width:60px;top:570.63px;font-size:9px;color:#15152a;text-align:center;transform:scaleX(0.96);transform-origin:50% 0;">08:54</div>
<div style="left:1150px;top:552px;width:75px;height:26px"><svg width="75" height="26" viewBox="0 0 75 26"><text x="0" y="0" transform="translate(5.5,22) skewX(-6) scale(0.8,1)" font-family="Liberation Sans" font-weight="bold" font-size="22" fill="#989898" stroke="#989898" stroke-width="0.7" letter-spacing="-1.2">SAP</text><text x="43" y="11.6" font-family="Liberation Sans" font-size="7.6" fill="#8c8c8c" letter-spacing="-0.1">Business</text><text x="42" y="22" font-family="Liberation Sans" font-weight="bold" font-size="12.6" fill="#eea31c" letter-spacing="-0.2">One</text></svg></div>
</body></html>
